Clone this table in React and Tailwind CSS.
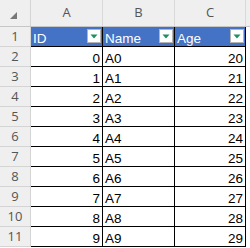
import React from 'react';

const rows = Array.from({ length: 10 }, (_, i) => ({ id: i, name: `A${i}`, age: 20 + i }));

const FilterButton = () => (
  <div className="w-[14px] h-[14px] bg-white border border-[#b4b4b4] flex items-center justify-center shrink-0 self-center">
    <svg width="8" height="5" viewBox="0 0 8 5">
      <polygon points="0.5,0.5 7.5,0.5 4,4.5" fill="#1f8f5f" />
    </svg>
  </div>
);

const HeadCell = ({ label, w }) => (
  <div className={`${w} h-full bg-[#4472c4] border-r border-black flex items-end justify-between pl-[2px] pr-[1px] pb-[1px]`}>
    <span className="text-white text-[13.5px] leading-none">{label}</span>
    <FilterButton />
  </div>
);

const App = () => {
  return (
    <div className="w-[250px] h-[248px] overflow-hidden bg-white font-['Liberation_Sans',Arial,sans-serif] text-black">
      {/* column letters */}
      <div className="flex h-[27px] bg-[#efefef] border-b border-[#c6c6c6] text-[#555] font-['Open_Sans',sans-serif] text-[13px]">
        <div className="w-[31px] border-r border-[#d4d4d4] flex items-end justify-end pr-[13px] pb-[7px]">
          <svg width="7" height="7" viewBox="0 0 7 7">
            <polygon points="7,0 7,7 0,7" fill="#777" />
          </svg>
        </div>
        <div className="w-[72px] border-r border-[#d9d9d9] flex items-center justify-center">A</div>
        <div className="w-[72px] border-r border-[#d9d9d9] flex items-center justify-center">B</div>
        <div className="w-[71px] border-r border-[#d9d9d9] flex items-center justify-center">C</div>
        <div className="flex-1" />
      </div>

      {/* table header row */}
      <div className="flex h-[20px]">
        <div className="w-[31px] bg-[#efefef] border-r border-b border-[#d4d4d4] flex items-center justify-center text-[#555] font-['Open_Sans',sans-serif] text-[13px]">1</div>
        <div className="flex border-b border-black">
          <HeadCell label="ID" w="w-[72px]" />
          <HeadCell label="Name" w="w-[72px]" />
          <HeadCell label="Age" w="w-[71px]" />
        </div>
        <div className="flex-1" />
      </div>

      {rows.map((r, i) => (
        <div key={r.id} className="flex h-[20px]">
          <div className="w-[31px] bg-[#efefef] border-r border-b border-[#d4d4d4] flex items-center justify-center text-[#555] font-['Open_Sans',sans-serif] text-[13px]">
            {i + 2}
          </div>
          <div className="flex border-b border-black text-[13.5px] leading-none">
            <div className="w-[72px] border-r border-black flex items-end justify-end pr-[2px] pb-[1px]">{r.id}</div>
            <div className="w-[72px] border-r border-black flex items-end pl-[2px] pb-[1px]">{r.name}</div>
            <div className="w-[71px] border-r border-black flex items-end justify-end pr-[2px] pb-[1px]">{r.age}</div>
          </div>
          <div className="flex-1" />
        </div>
      ))}
    </div>
  );
};

export default App;
